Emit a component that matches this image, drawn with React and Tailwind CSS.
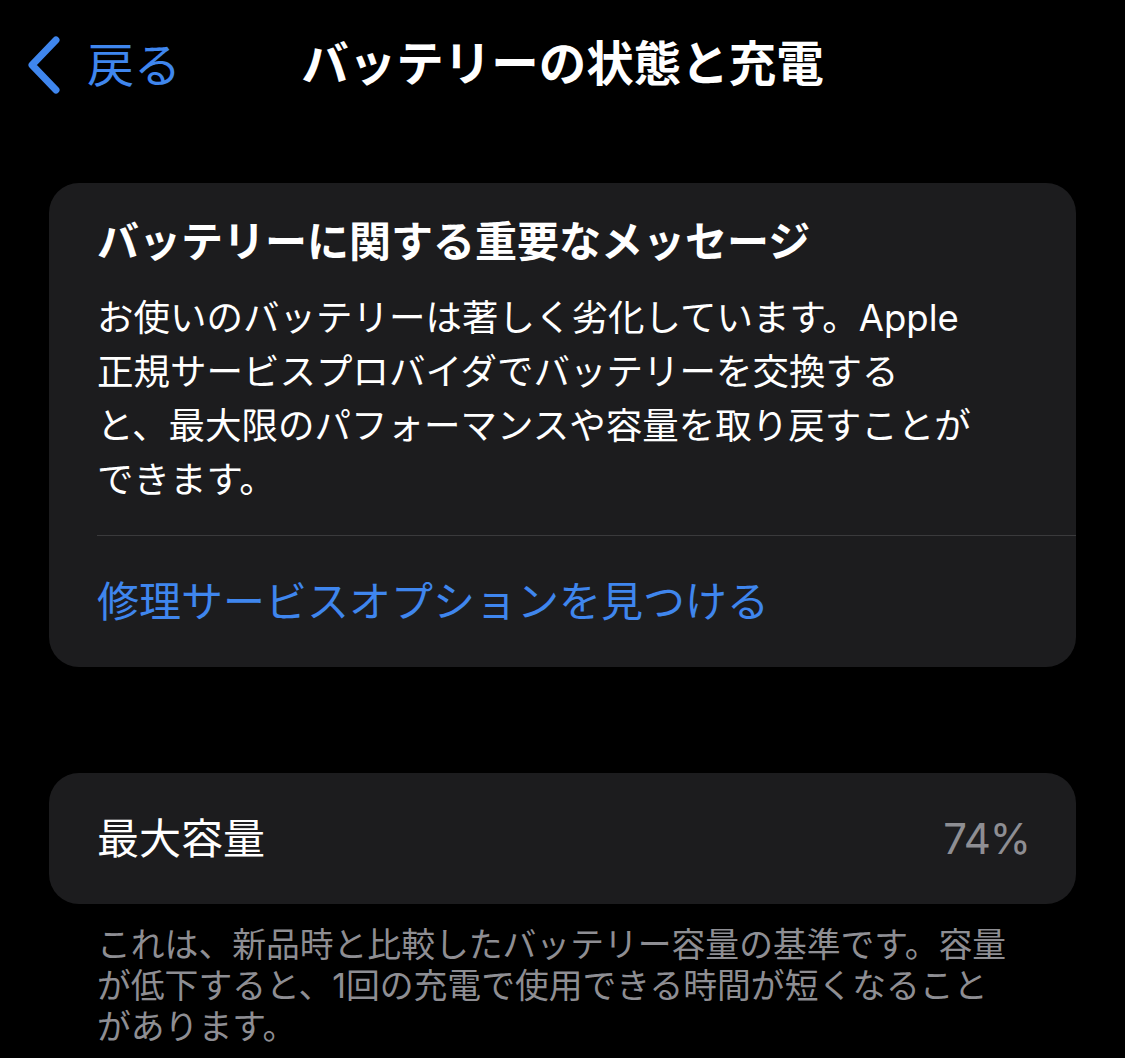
const FONT = { fontFamily: '"Inter", "Noto Sans CJK JP", sans-serif' };

function BackChevron() {
  return (
    <svg width="40" height="60" viewBox="0 0 40 60" fill="none" aria-hidden="true">
      <path d="M32 6 L8 31 L32 56" stroke="#3f86ee" strokeWidth="7" strokeLinecap="round" strokeLinejoin="round" />
    </svg>
  );
}

export default function App() {
  return (
    <div className="min-h-[1058px] w-full bg-black text-white" style={FONT}>
      {/* Navigation bar */}
      <header className="grid h-[128px] grid-cols-[1fr_auto_1fr] items-center">
        <button type="button" className="flex items-center gap-[23px] pl-[24px] text-[#3f86ee]">
          <BackChevron />
          <span className="text-[47px] leading-none">戻る</span>
        </button>
        <h1 className="text-[47.5px] font-bold leading-none">バッテリーの状態と充電</h1>
        <div />
      </header>

      {/* Important message card */}
      <section className="mx-[49px] mt-[55px] rounded-[30px] bg-[#1c1c1e]">
        <div className="px-[48px] pt-[34px] pb-[28px]">
          <h2 className="text-[42px] font-bold leading-[50px]">バッテリーに関する重要なメッセージ</h2>
          <p className="mt-[24px] text-[36.5px] leading-[54px]">
            お使いのバッテリーは著しく劣化しています。Apple
            <br />
            正規サービスプロバイダでバッテリーを交換する
            <br />
            と、最大限のパフォーマンスや容量を取り戻すことが
            <br />
            できます。
          </p>
        </div>
        <div className="ml-[48px] h-px bg-[#3a3a3c]" />
        <div className="px-[48px] pt-[38px] pb-[37px]">
          <a href="#" className="block text-[42px] leading-[56px] text-[#3f86ee]">
            修理サービスオプションを見つける
          </a>
        </div>
      </section>

      {/* Maximum capacity */}
      <section className="mx-[49px] mt-[106px] flex h-[131px] items-center justify-between rounded-[30px] bg-[#1c1c1e] pl-[48px] pr-[46px]">
        <span className="text-[42px] leading-none">最大容量</span>
        <span className="text-[42px] leading-none tracking-[-1px] text-[#8e8e93]">74%</span>
      </section>
      <p className="mt-[20px] px-[97px] text-[33.8px] leading-[41px] text-[#8e8e93]">
        これは、新品時と比較したバッテリー容量の基準です。容量
        <br />
        が低下すると、1回の充電で使用できる時間が短くなること
        <br />
        があります。
      </p>
    </div>
  );
}
